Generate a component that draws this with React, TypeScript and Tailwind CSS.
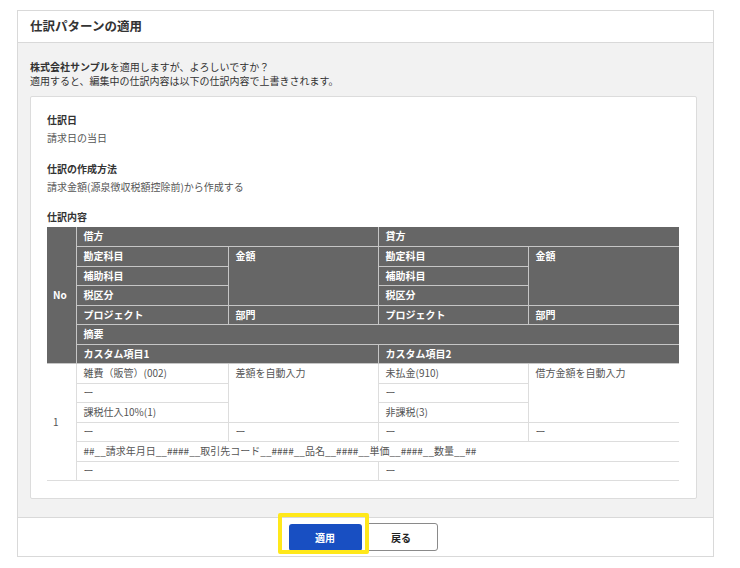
import React from "react";

const H = "bg-[#666666] text-white font-bold border border-[#c6c6c6] px-[7px] align-top text-left";
const B = "border-b border-[#dddddd] px-[7px] align-top text-left text-[#555]";

export default function App() {
  return (
    <div
      className="w-[740px] h-[568px] bg-white pt-[10px] pl-[17px]"
      style={{ fontFamily: '"Noto Sans CJK JP", "Noto Sans", sans-serif' }}
    >
      <div className="w-[697px] h-[547px] border border-[#d9d9d9] flex flex-col">
        {/* header */}
        <div className="h-[32px] border-b border-[#d9d9d9] flex items-center pl-[12px]">
          <h1 className="text-[12.5px] font-bold text-[#333] leading-none">仕訳パターンの適用</h1>
        </div>
        {/* body */}
        <div className="flex-1 bg-[#f2f2f2] pt-[17px] pb-[18px] pl-[12px] pr-[16px] flex flex-col">
          <p className="text-[10px] leading-[14px] text-[#333]">
            <span className="font-bold">株式会社サンプル</span>を適用しますが、よろしいですか？
          </p>
          <p className="text-[10px] leading-[14px] text-[#333]">
            適用すると、編集中の仕訳内容は以下の仕訳内容で上書きされます。
          </p>
          <div className="mt-[8px] flex-1 bg-white border border-[#dcdcdc] rounded-[2px] pt-[14px] pl-[16px] pr-[16px]">
            <div className="text-[10px] leading-[18px] font-bold text-[#333]">仕訳日</div>
            <div className="text-[10px] leading-[18px] text-[#555]">請求日の当日</div>
            <div className="mt-[13px] text-[10px] leading-[18px] font-bold text-[#333]">仕訳の作成方法</div>
            <div className="text-[10px] leading-[18px] text-[#555]">請求金額(源泉徴収税額控除前)から作成する</div>
            <div className="mt-[12px] text-[10px] leading-[18px] font-bold text-[#333]">仕訳内容</div>
            <table className="mt-[1px] w-[632px] table-fixed border-collapse text-[10px] leading-[18px]">
              <colgroup>
                <col className="w-[29px]" />
                <col className="w-[152px]" />
                <col className="w-[150px]" />
                <col className="w-[150px]" />
                <col className="w-[151px]" />
              </colgroup>
              <thead>
                <tr className="h-[19.5px]">
                  <th rowSpan={7} className="bg-[#666666] text-white font-bold border border-[#c6c6c6] border-l-0 border-t-0 text-left pl-[6px] align-middle">No</th>
                  <th colSpan={2} className={H + " border-t-0"}>借方</th>
                  <th colSpan={2} className={H + " border-t-0 border-r-0"}>貸方</th>
                </tr>
                <tr className="h-[19.5px]">
                  <th className={H}>勘定科目</th>
                  <th rowSpan={3} className={H}>金額</th>
                  <th className={H}>勘定科目</th>
                  <th rowSpan={3} className={H + " border-r-0"}>金額</th>
                </tr>
                <tr className="h-[19.5px]">
                  <th className={H}>補助科目</th>
                  <th className={H}>補助科目</th>
                </tr>
                <tr className="h-[19.5px]">
                  <th className={H}>税区分</th>
                  <th className={H}>税区分</th>
                </tr>
                <tr className="h-[19.5px]">
                  <th className={H}>プロジェクト</th>
                  <th className={H}>部門</th>
                  <th className={H}>プロジェクト</th>
                  <th className={H + " border-r-0"}>部門</th>
                </tr>
                <tr className="h-[19.5px]">
                  <th colSpan={4} className={H + " border-r-0"}>摘要</th>
                </tr>
                <tr className="h-[19.5px]">
                  <th colSpan={2} className={H}>カスタム項目1</th>
                  <th colSpan={2} className={H + " border-r-0"}>カスタム項目2</th>
                </tr>
              </thead>
              <tbody>
                <tr className="h-[19.5px]">
                  <td rowSpan={6} className="border-b border-r border-[#dddddd] pl-[6px] align-middle text-[#555]">1</td>
                  <td className={B + " border-r"}>雑費（販管）(002)</td>
                  <td rowSpan={3} className={B + " border-r"}>差額を自動入力</td>
                  <td className={B + " border-r"}>未払金(910)</td>
                  <td rowSpan={3} className={B}>借方金額を自動入力</td>
                </tr>
                <tr className="h-[19.5px]">
                  <td className={B + " border-r"}>ー</td>
                  <td className={B + " border-r"}>ー</td>
                </tr>
                <tr className="h-[19.5px]">
                  <td className={B + " border-r"}>課税仕入10%(1)</td>
                  <td className={B + " border-r"}>非課税(3)</td>
                </tr>
                <tr className="h-[19.5px]">
                  <td className={B + " border-r"}>ー</td>
                  <td className={B + " border-r"}>ー</td>
                  <td className={B + " border-r"}>ー</td>
                  <td className={B}>ー</td>
                </tr>
                <tr className="h-[19.5px]">
                  <td colSpan={4} className={B}>##__請求年月日__####__取引先コード__####__品名__####__単価__####__数量__##</td>
                </tr>
                <tr className="h-[19.5px]">
                  <td colSpan={2} className={B + " border-r"}>ー</td>
                  <td colSpan={2} className={B}>ー</td>
                </tr>
              </tbody>
            </table>
          </div>
        </div>
        {/* footer */}
        <div className="h-[39px] border-t border-[#d9d9d9] flex items-center justify-center pr-[5px] gap-[3px]">
          <div className="relative">
            <button className="w-[73px] h-[27px] rounded-[3px] bg-[#184fc2] text-white text-[10px] font-bold">適用</button>
            <div className="absolute left-[-11px] top-[-10px] w-[91px] h-[41px] border-[4px] border-[#ffe81a] rounded-[2px] z-10"></div>
          </div>
          <button className="w-[73px] h-[28px] rounded-[3px] bg-white border border-[#8a8a8a] text-[#222] text-[10px] font-bold">戻る</button>
        </div>
      </div>
    </div>
  );
}
